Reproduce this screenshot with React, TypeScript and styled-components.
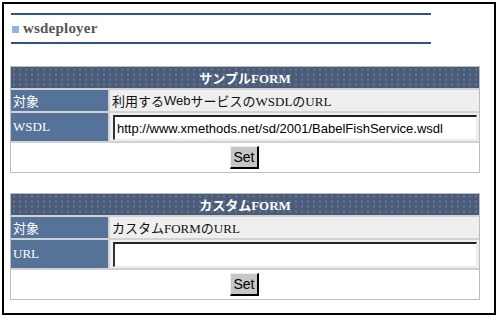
import React from "react";
import styled, { createGlobalStyle } from "styled-components";

const Global = createGlobalStyle`
  html, body { margin: 0; padding: 0; background: #fff; }
  body { font-family: "Liberation Serif", "Noto Sans CJK JP", serif; }
`;

const Frame = styled.div`
  box-sizing: border-box;
  margin: 2px 0 0 2px;
  width: 494px;
  height: 313px;
  border: 2px solid #000;
  padding: 9px 0 0 6px;
  display: flex;
  flex-direction: column;
`;

const TitleBlock = styled.div`
  width: 420px;
  margin-left: 1px;
  border-top: 2px solid #2d5394;
  border-bottom: 2px solid #2d5394;
  height: 27px;
  box-sizing: content-box;
  display: flex;
  align-items: center;
  gap: 4px;
`;

const TitleIcon = styled.span`
  width: 7px;
  height: 7px;
  margin-left: 1px;
  margin-top: 2px;
  background: #93b3dc;
  background-image: radial-gradient(#7d9fcc 40%, transparent 41%);
  background-size: 2px 2px;
`;

const TitleText = styled.span`
  font-family: "Liberation Serif", serif;
  font-weight: bold;
  font-size: 15px;
  color: #555;
  letter-spacing: 0.2px;
`;

const Table = styled.div<{ $top: number }>`
  margin-top: ${(p) => p.$top}px;
  width: 470px;
  box-sizing: border-box;
  border: 1px solid #bdbdbd;
  background: #d2d2d2;
  display: grid;
  grid-template-columns: 97px 1fr;
  gap: 2px;
`;

const Header = styled.div`
  grid-column: 1 / -1;
  height: 21px;
  background-color: #4a5c76;
  background-image: radial-gradient(#5d6f9a 30%, transparent 35%);
  background-size: 6px 5px;
  color: #fff;
  font-weight: bold;
  font-size: 13px;
  font-family: "Liberation Serif", "Noto Sans CJK JP", serif;
  display: flex;
  align-items: center;
  justify-content: center;
`;

const Label = styled.div<{ $h: number }>`
  height: ${(p) => p.$h}px;
  background: #557399;
  color: #fff;
  font-size: 13px;
  padding-left: 2px;
  display: flex;
  align-items: center;
  font-family: "Liberation Serif", "Noto Sans CJK JP", serif;
`;

const Value = styled.div<{ $h: number }>`
  height: ${(p) => p.$h}px;
  background: #efefef;
  color: #111;
  font-size: 13px;
  padding-left: 2px;
  display: flex;
  align-items: center;
  font-family: "Liberation Serif", "Noto Sans CJK JP", serif;
`;

const Sans = styled.span`
  font-family: "Liberation Sans", sans-serif;
`;

const Input = styled.input`
  box-sizing: border-box;
  width: 364px;
  height: 25px;
  margin-left: 1px;
  border-style: solid;
  border-width: 2px 1px 1px 2px;
  border-color: #222 #e8e8e8 #e8e8e8 #333;
  background: #fff;
  font-family: "Liberation Sans", sans-serif;
  font-size: 13px;
  color: #000;
  padding: 2px 2px 0 2px;
  outline: none;
`;

const ActionRow = styled.div`
  grid-column: 1 / -1;
  height: 29px;
  background: #fff;
  display: flex;
  align-items: center;
  justify-content: center;
`;

const Button = styled.button`
  box-sizing: border-box;
  width: 29px;
  height: 23px;
  padding: 0;
  margin-right: 1px;
  background: #c6c6c6;
  border-style: solid;
  border-width: 1px 2px 2px 1px;
  border-color: #eee #000 #000 #eee;
  font-family: "Liberation Sans", sans-serif;
  font-size: 14px;
  color: #000;
`;

export default function App() {
  return (
    <>
      <Global />
      <Frame>
        <TitleBlock>
          <TitleIcon />
          <TitleText>wsdeployer</TitleText>
        </TitleBlock>

        <Table $top={22}>
          <Header>サンプルFORM</Header>
          <Label $h={21}>対象</Label>
          <Value $h={21}>
            利用する<Sans>Web</Sans>サービスのWSDLのURL
          </Value>
          <Label $h={28}>WSDL</Label>
          <Value $h={28}>
            <Input defaultValue="http://www.xmethods.net/sd/2001/BabelFishService.wsdl" />
          </Value>
          <ActionRow>
            <Button>Set</Button>
          </ActionRow>
        </Table>

        <Table $top={20}>
          <Header>カスタムFORM</Header>
          <Label $h={21}>対象</Label>
          <Value $h={21}>カスタムFORMのURL</Value>
          <Label $h={28}>URL</Label>
          <Value $h={28}>
            <Input defaultValue="" />
          </Value>
          <ActionRow>
            <Button>Set</Button>
          </ActionRow>
        </Table>
      </Frame>
    </>
  );
}
